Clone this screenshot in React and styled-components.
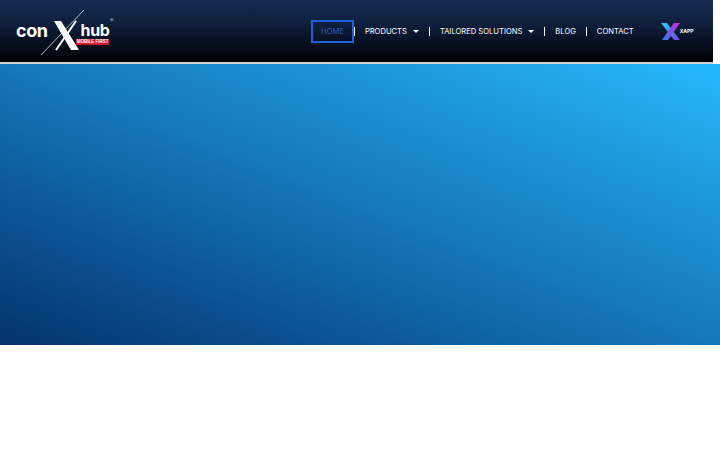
import React from "react";
import styled, { createGlobalStyle } from "styled-components";

const GlobalStyle = createGlobalStyle`
  html, body {
    margin: 0;
    padding: 0;
    background: #fff;
    overflow: hidden;
  }
  body {
    font-family: Inter, "Liberation Sans", sans-serif;
  }
`;

const Page = styled.div`
  width: 720px;
  height: 450px;
  display: flex;
  flex-direction: column;
`;

const Header = styled.header`
  width: 713px;
  height: 62px;
  flex: none;
  display: flex;
  align-items: center;
  background: linear-gradient(180deg, #172b52 0%, #10203f 35%, #000105 100%);
  border-bottom: 2px solid #d0d3d6;
`;

const Logo = styled.a`
  display: flex;
  align-items: center;
  width: 311px;
  height: 100%;
  flex: none;
  padding-left: 16px;
  box-sizing: border-box;
  color: #fff;
`;

const LogoWord = styled.span`
  display: block;
  font-size: ${(p) => p.$size}px;
  font-weight: 700;
  letter-spacing: -0.4px;
  line-height: 14px;
`;

const LogoMark = styled.svg`
  width: 32px;
  height: 50px;
  flex: none;
  overflow: visible;
`;

const HubBlock = styled.div`
  display: flex;
  flex-direction: column;
  align-items: flex-end;
  gap: 2px;
  padding-top: 6px;
  position: relative;
`;

const Registered = styled.span`
  position: absolute;
  top: 1px;
  right: -4px;
  font-size: 5px;
  line-height: 5px;
  color: #cfd3da;
`;

const Badge = styled.span`
  background: #d3182e;
  color: #fff;
  font-family: "Liberation Sans", sans-serif;
  font-size: 4.5px;
  font-weight: 700;
  line-height: 6px;
  padding: 0 1px;
  margin-left: -4px;
  white-space: nowrap;
`;

const Nav = styled.nav`
  display: flex;
  align-items: center;
  height: 23px;
`;

const NavItem = styled.a`
  display: flex;
  align-items: center;
  height: 23px;
  box-sizing: border-box;
  padding: 0 ${(p) => (p.$active ? 8 : 10)}px;
  font-size: 7.6px;
  white-space: nowrap;
  color: ${(p) => (p.$active ? "#1d5fd6" : "#fff")};
  border: ${(p) => (p.$active ? "2px solid #1e5fe0" : "none")};
`;

const Divider = styled.span`
  width: 1px;
  height: 9px;
  flex: none;
  background: #fff;
`;

const Caret = styled.span`
  width: 0;
  height: 0;
  margin-left: 6px;
  border-left: 3px solid transparent;
  border-right: 3px solid transparent;
  border-top: 3px solid #f2f4f7;
`;

const AppLink = styled.a`
  display: flex;
  align-items: center;
  margin-left: 17px;
  color: #fff;
  font-size: 5px;
  font-weight: 700;
`;

const AppMark = styled.svg`
  width: 19px;
  height: 17px;
`;

const Hero = styled.section`
  width: 720px;
  height: 281px;
  flex: none;
  background: linear-gradient(
    to top right,
    #04336f 0%,
    #1578b9 50%,
    #25b8fc 100%
  );
`;

const links = [
  { label: "HOME", active: true },
  { label: "PRODUCTS", caret: true },
  { label: "TAILORED SOLUTIONS", caret: true },
  { label: "BLOG" },
  { label: "CONTACT" },
];

export default function App() {
  return (
    <>
      <GlobalStyle />
      <Page>
        <Header>
          <Logo>
            <LogoWord $size={18}>con</LogoWord>
            <LogoMark viewBox="0 0 32 50">
              <path d="M6 15h7l18 29h-8z" fill="#fff" />
              <path d="M28 15L8 44" stroke="#fff" strokeWidth="2" fill="none" />
              <path d="M-7 49L36 4" stroke="#dfe4ee" strokeWidth="0.8" />
            </LogoMark>
            <HubBlock>
              <LogoWord $size={16}>hub</LogoWord>
              <Registered>®</Registered>
              <Badge>MOBILE FIRST</Badge>
            </HubBlock>
          </Logo>
          <Nav>
            {links.map((l, i) => (
              <React.Fragment key={l.label}>
                {i > 0 && <Divider />}
                <NavItem $active={l.active}>
                  {l.label}
                  {l.caret && <Caret />}
                </NavItem>
              </React.Fragment>
            ))}
          </Nav>
          <AppLink>
            <AppMark viewBox="0 0 19 17">
              <defs>
                <linearGradient id="xa" x1="0" y1="0" x2="1" y2="1">
                  <stop offset="0" stopColor="#27d3e6" />
                  <stop offset="1" stopColor="#7a3cf0" />
                </linearGradient>
                <linearGradient id="xb" x1="1" y1="0" x2="0" y2="1">
                  <stop offset="0" stopColor="#d32bd8" />
                  <stop offset="1" stopColor="#2f7cf2" />
                </linearGradient>
              </defs>
              <path d="M0 0h6l13 17h-6z" fill="url(#xa)" />
              <path d="M19 0h-6L1 17h6z" fill="url(#xb)" />
            </AppMark>
            XAPP
          </AppLink>
        </Header>
        <Hero />
      </Page>
    </>
  );
}
